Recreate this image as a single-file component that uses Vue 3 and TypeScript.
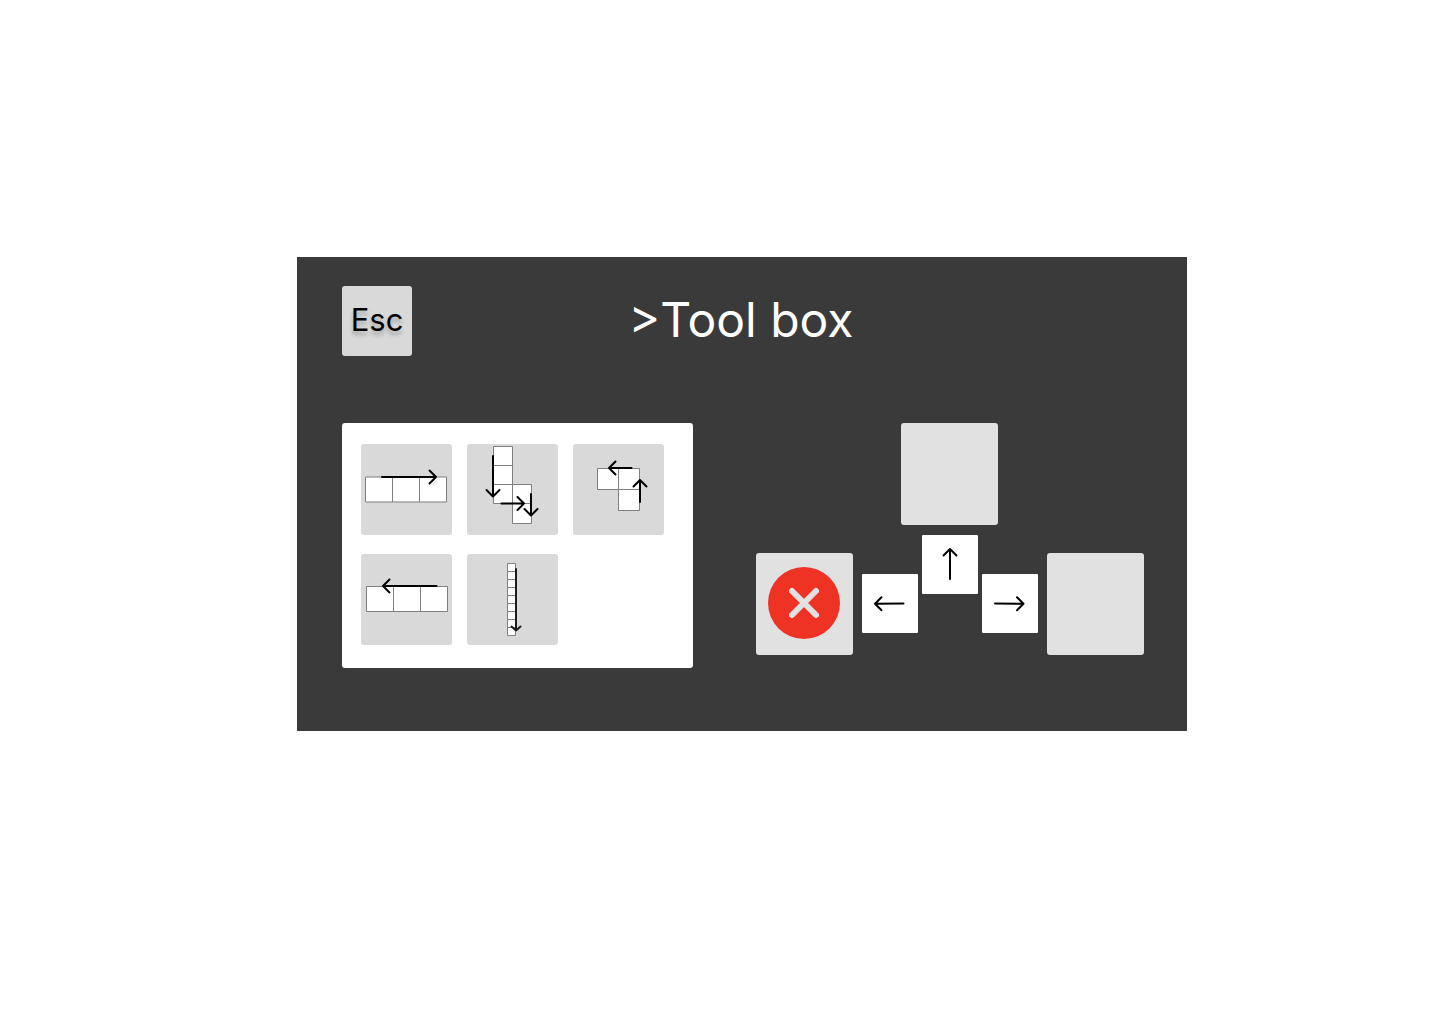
<script setup lang="ts">
interface Tool {
  id: string
  label: string
  cells: string
  arrows: string[]
  thin?: boolean
}

const tools: Tool[] = [
  {
    id: 'right',
    label: 'Three steps right',
    cells: 'M4.5 33H85.5V58H4.5ZM31.5 33V58M58.5 33V58',
    arrows: ['M21 33H75M68.5 26.5L75 33L68.5 39.5'],
  },
  {
    id: 'stairs',
    label: 'Down, right, down',
    cells: 'M26.5 2.5h19v19h-19ZM26.5 21.5h19v19h-19ZM26.5 40.5h19v19h-19ZM45.5 40.5h19v19h-19ZM45.5 59.5h19v20h-19Z',
    arrows: [
      'M26 12V52.5M19.5 46L26 52.5L32.5 46',
      'M34.5 59.5H57M50.5 53L57 59.5L50.5 66',
      'M64 50V71.5M57.5 65L64 71.5L70.5 65',
    ],
  },
  {
    id: 'corner',
    label: 'Up, then left',
    cells: 'M24.5 24.5h21v21h-21ZM45.5 24.5h21v21h-21ZM45.5 45.5h21v21h-21Z',
    arrows: [
      'M58.5 24H36M42.5 17.5L36 24L42.5 30.5',
      'M67 58V36M60.5 42.5L67 36L73.5 42.5',
    ],
  },
  {
    id: 'left',
    label: 'Three steps left',
    cells: 'M5.5 32.5H86.5V57.5H5.5ZM32.5 32.5V57.5M59.5 32.5V57.5',
    arrows: ['M75.5 32H22M28.5 25.5L22 32L28.5 38.5'],
  },
  {
    id: 'down',
    label: 'Nine steps down',
    cells:
      'M40.5 9.5H48.5V81.5H40.5ZM40.5 17.5H48.5M40.5 25.5H48.5M40.5 33.5H48.5M40.5 41.5H48.5M40.5 49.5H48.5M40.5 57.5H48.5M40.5 65.5H48.5M40.5 73.5H48.5',
    arrows: ['M49 15V76.5M44.5 72.5L49 76.5L53.5 72.5'],
    thin: true,
  },
]
</script>

<template>
  <main class="page">
    <section class="panel">
      <header class="header">
        <button class="esc" type="button">Esc</button>
        <h1 class="title">&gt;Tool box</h1>
      </header>

      <div class="body">
        <div class="palette">
          <button v-for="tool in tools" :key="tool.id" class="tile" type="button" :aria-label="tool.label">
            <svg viewBox="0 0 91 91" width="91" height="91" aria-hidden="true">
              <path class="cells" :d="tool.cells" />
              <path v-for="d in tool.arrows" :key="d" class="arrow" :class="{ thin: tool.thin }" :d="d" />
            </svg>
          </button>
        </div>

        <div class="pad">
          <button class="slot slot-top" type="button" aria-label="Forward slot"></button>
          <div class="pad-row">
            <div class="side">
              <button class="slot" type="button" aria-label="Left slot, blocked">
                <svg viewBox="0 0 97 102" width="97" height="102" aria-hidden="true">
                  <circle cx="48" cy="50" r="36" fill="#ee3224" />
                  <path class="cross" d="M36 38L60 62M60 38L36 62" />
                </svg>
              </button>
              <button class="key" type="button" aria-label="Left">
                <svg viewBox="0 0 56 59" width="56" height="59" aria-hidden="true">
                  <path class="arrow" d="M41.5 29.4L13 29.8M19.5 23.3L13 29.8L19.5 36.3" />
                </svg>
              </button>
            </div>
            <button class="key" type="button" aria-label="Up">
              <svg viewBox="0 0 56 59" width="56" height="59" aria-hidden="true">
                <path class="arrow" d="M28 44V14M21.5 20.5L28 14L34.5 20.5" />
              </svg>
            </button>
            <div class="side">
              <button class="key" type="button" aria-label="Right">
                <svg viewBox="0 0 56 59" width="56" height="59" aria-hidden="true">
                  <path class="arrow" d="M13 29.4L41.5 29.8M35 23.3L41.5 29.8L35 36.3" />
                </svg>
              </button>
              <button class="slot" type="button" aria-label="Right slot"></button>
            </div>
          </div>
        </div>
      </div>
    </section>
  </main>
</template>

<style>
body {
  margin: 0;
  background: #fff;
}
</style>

<style scoped>
.page {
  box-sizing: border-box;
  min-height: 100vh;
  padding: 0 0 36px 44px;
  display: flex;
  align-items: center;
  justify-content: center;
  font-family: Inter, "Liberation Sans", sans-serif;
}

button {
  padding: 0;
  border: 0;
  font: inherit;
  color: #000;
  cursor: pointer;
}

svg {
  display: block;
}

.panel {
  box-sizing: border-box;
  width: 100%;
  max-width: 890px;
  padding: 29px 43px 63px 45px;
  background: #3a3a3a;
}

.header {
  display: grid;
  grid-template-columns: 70px 1fr 74px;
  align-items: start;
}

.esc {
  height: 70px;
  padding-bottom: 2px;
  border-radius: 3px;
  background: #d9d9d9;
  font-size: 31px;
  line-height: 40px;
  text-shadow: 0 4px 4px rgba(0, 0, 0, 0.25);
}

.title {
  margin: 0;
  color: #fff;
  font-size: 48px;
  font-weight: 400;
  line-height: 68px;
  text-align: center;
}

.body {
  margin-top: 67px;
  display: flex;
  flex-wrap: wrap;
  align-items: flex-start;
  justify-content: space-between;
  gap: 32px;
}

.palette {
  box-sizing: border-box;
  width: 351px;
  padding: 21px 19px 23px;
  display: grid;
  grid-template-columns: repeat(3, 91px);
  gap: 19px 15px;
  border-radius: 3px;
  background: #fff;
}

.tile {
  border-radius: 3px;
  background: #d9d9d9;
}

.pad {
  display: flex;
  flex-direction: column;
  align-items: center;
  gap: 10px;
}

.pad-row {
  display: flex;
  align-items: flex-start;
  gap: 4px;
}

.side {
  margin-top: 18px;
  display: flex;
  align-items: center;
  gap: 9px;
}

.slot {
  width: 97px;
  height: 102px;
  border-radius: 3px;
  background: #e1e1e1;
}

.slot-top {
  margin-right: 1px;
}

.key {
  width: 56px;
  height: 59px;
  border-radius: 1px;
  background: #fff;
}

.side .key {
  margin-bottom: 1px;
}

.cells {
  fill: #fff;
  stroke: #7f7f7f;
  stroke-width: 1;
}

.arrow {
  fill: none;
  stroke: #000;
  stroke-width: 2;
  stroke-linecap: round;
  stroke-linejoin: round;
}

.arrow.thin {
  stroke: #1c1c1c;
}

.cross {
  fill: none;
  stroke: #e1e1e1;
  stroke-width: 6;
  stroke-linecap: round;
}
</style>
